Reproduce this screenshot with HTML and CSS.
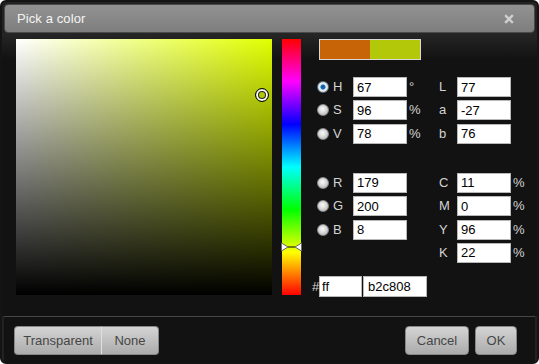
FILE: index.html
```html
<!DOCTYPE html>
<html>
<head>
<meta charset="utf-8">
<link rel="stylesheet" href="styles.css">
</head>
<body>
<div class="dialog">
  <div class="titlebar">
    <span class="title">Pick a color</span>
    <svg class="close" width="10" height="10" viewBox="0 0 10 10"><path d="M2 2 L8 8 M8 2 L2 8" stroke="#cfcfcf" stroke-width="2.4" stroke-linecap="square"/></svg>
  </div>
  <div class="body">
    <div class="sv">
      <div class="sv-marker"></div>
    </div>
    <div class="hue">
      <svg class="hue-marker" width="21" height="10" viewBox="0 0 21 10"><path d="M0.5 1 L7 5 L0.5 9 Z" fill="#fff" stroke="#666" stroke-width="1"/><path d="M20.5 1 L14 5 L20.5 9 Z" fill="#fff" stroke="#666" stroke-width="1"/><path d="M7 5 H14" stroke="#000" stroke-width="1.2"/></svg>
    </div>
    <div class="panel">
      <div class="swatch"><span class="old"></span><span class="new"></span></div>
      <div class="grid g1">
        <span class="radio checked"></span><span class="lbl">H</span><input class="fld" value="67"><span class="unit">°</span><span class="lbl">L</span><input class="fld" value="77"><span></span>
        <span class="radio"></span><span class="lbl">S</span><input class="fld" value="96"><span class="unit">%</span><span class="lbl">a</span><input class="fld" value="-27"><span></span>
        <span class="radio"></span><span class="lbl">V</span><input class="fld" value="78"><span class="unit">%</span><span class="lbl">b</span><input class="fld" value="76"><span></span>
      </div>
      <div class="grid g2">
        <span class="radio"></span><span class="lbl">R</span><input class="fld" value="179"><span></span><span class="lbl">C</span><input class="fld" value="11"><span class="unit">%</span>
        <span class="radio"></span><span class="lbl">G</span><input class="fld" value="200"><span></span><span class="lbl">M</span><input class="fld" value="0"><span class="unit">%</span>
        <span class="radio"></span><span class="lbl">B</span><input class="fld" value="8"><span></span><span class="lbl">Y</span><input class="fld" value="96"><span class="unit">%</span>
        <span></span><span></span><span></span><span></span><span class="lbl">K</span><input class="fld" value="22"><span class="unit">%</span>
      </div>
      <div class="hexrow">
        <span class="hash">#</span><input class="hex alpha" value="ff"><input class="hex rgb" value="b2c808">
      </div>
    </div>
  </div>
  <div class="footer">
    <div class="group">
      <button class="btn g-left w-trans">Transparent</button><button class="btn g-right w-none">None</button>
    </div>
    <div class="actions">
      <button class="btn w-cancel">Cancel</button>
      <button class="btn w-ok">OK</button>
    </div>
  </div>
</div>
</body>
</html>
```
FILE: styles.css
```css
html, body {
  margin: 0;
  padding: 0;
  background: #fff;
}
body {
  font-family: "Liberation Sans", Arial, sans-serif;
  font-size: 13px;
}
.dialog {
  width: 539px;
  height: 364px;
  box-sizing: border-box;
  border: 2px solid #141414;
  border-radius: 6px;
  background: #222;
  display: flex;
  flex-direction: column;
  overflow: hidden;
}
.titlebar {
  margin: 2px 2px 0 2px;
  height: 29px;
  box-sizing: border-box;
  border: 1px solid #4a4a4a;
  border-radius: 4px;
  background: linear-gradient(#929292, #7e7e7e);
  display: flex;
  align-items: center;
  justify-content: space-between;
  padding: 0 20px 0 12px;
}
.title {
  color: #f4f4f4;
  font-size: 13px;
  letter-spacing: 0.1px;
}
.close {
  display: block;
}
.body {
  height: 283px;
  box-sizing: border-box;
  padding: 6px 0 0 14px;
  display: flex;
  align-items: flex-start;
  background: linear-gradient(#262626, #121212 26px);
}
.sv {
  position: relative;
  width: 256px;
  height: 256px;
  background: linear-gradient(to top, #000, rgba(0,0,0,0)), linear-gradient(to right, #fff, #e1ff00);
}
.sv-marker {
  position: absolute;
  left: 239px;
  top: 49px;
  width: 14px;
  height: 14px;
  box-sizing: border-box;
  border-radius: 50%;
  border: 1px solid #000;
  box-shadow: inset 0 0 0 2px #fff, inset 0 0 0 3px #222;
}
.hue {
  position: relative;
  margin-left: 10px;
  width: 19px;
  height: 256px;
  background: linear-gradient(#f00, #f0f 16.67%, #00f 33.33%, #0ff 50%, #0f0 66.67%, #ff0 83.33%, #f00);
}
.hue-marker {
  position: absolute;
  left: -1px;
  top: 203px;
}
.panel {
  margin-left: 11px;
  display: flex;
  flex-direction: column;
}
.swatch {
  margin-left: 7px;
  width: 102px;
  height: 21px;
  box-sizing: border-box;
  border: 1px solid #d8d8d8;
  display: flex;
}
.swatch .old {
  flex: 1;
  background: #c86408;
}
.swatch .new {
  flex: 1;
  background: #b2c808;
}
.grid {
  display: grid;
  grid-template-columns: 19px 22px 54px 30px 20px 54px 16px;
  grid-auto-rows: 20px;
  row-gap: 3.4px;
  align-items: center;
}
.g1 { margin-top: 17px; }
.g2 { margin-top: 29px; }
.radio {
  justify-self: end;
  margin-right: 2px;
  width: 12px;
  height: 12px;
  box-sizing: border-box;
  border-radius: 50%;
  border: 1px solid #8a8a8a;
  background: radial-gradient(circle at 45% 40%, #fafafa 0, #d8d8d8 45%, #a8a8a8 100%);
}
.radio.checked {
  border-color: #5a6c7a;
  background: radial-gradient(circle at 50% 50%, #0d4f86 0, #1d77bd 2.2px, #e8eef4 3px, #cfd7de 100%);
}
.lbl {
  color: #d4d4d4;
  padding-left: 2px;
  line-height: 20px;
}
.unit {
  color: #d4d4d4;
  padding-left: 2px;
  line-height: 20px;
}
.fld {
  width: 54px;
  height: 20px;
  box-sizing: border-box;
  border: 1px solid #b8b8b8;
  padding: 0 0 0 3px;
  margin: 0;
  font-family: "Liberation Sans", Arial, sans-serif;
  font-size: 13px;
  color: #000;
  background: #fff;
  outline: none;
}
.hexrow {
  margin-top: 13px;
  display: flex;
  align-items: center;
}
.hash {
  color: #d4d4d4;
  width: 7px;
  font-size: 13px;
}
.hex {
  height: 21px;
  box-sizing: border-box;
  border: 1px solid #b8b8b8;
  margin: 0;
  font-family: "Liberation Sans", Arial, sans-serif;
  font-size: 13px;
  color: #000;
  background: #fff;
  outline: none;
}
.hex.alpha {
  width: 43px;
  padding: 0 0 0 2px;
}
.hex.rgb {
  width: 64px;
  margin-left: 1px;
  padding: 0 0 0 4px;
}
.footer {
  margin: 0 2px;
  flex: 1;
  border-top: 1px solid #464646;
  background: #121212;
  padding: 9px 18px 0 10px;
  display: flex;
  justify-content: space-between;
  align-items: flex-start;
}
.group {
  display: flex;
}
.actions {
  display: flex;
  gap: 6px;
}
.btn {
  height: 29px;
  box-sizing: border-box;
  border: 1px solid #888;
  border-radius: 4px;
  background: linear-gradient(#d4d4d4, #ababab);
  color: #464646;
  font-family: "Liberation Sans", Arial, sans-serif;
  font-size: 13px;
  padding: 0;
  margin: 0;
}
.g-left {
  border-radius: 4px 0 0 4px;
  border-right: 1px solid #e0e0e0;
}
.g-right {
  border-radius: 0 4px 4px 0;
  border-left: none;
}
.w-trans { width: 88px; }
.w-none { width: 57px; }
.w-cancel { width: 64px; }
.w-ok { width: 42px; }
```
